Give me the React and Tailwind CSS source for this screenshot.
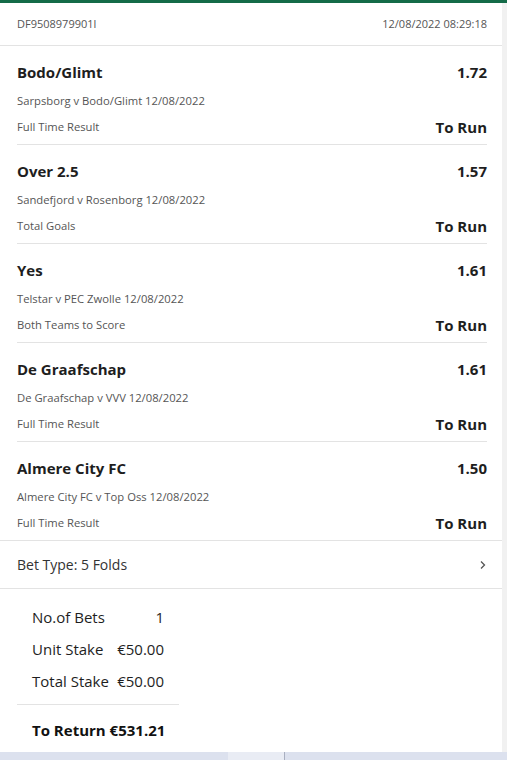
import React from "react";

const legs = [
  { pick: "Bodo/Glimt", odds: "1.72", event: "Sarpsborg v Bodo/Glimt 12/08/2022", market: "Full Time Result" },
  { pick: "Over 2.5", odds: "1.57", event: "Sandefjord v Rosenborg 12/08/2022", market: "Total Goals" },
  { pick: "Yes", odds: "1.61", event: "Telstar v PEC Zwolle 12/08/2022", market: "Both Teams to Score" },
  { pick: "De Graafschap", odds: "1.61", event: "De Graafschap v VVV 12/08/2022", market: "Full Time Result" },
  { pick: "Almere City FC", odds: "1.50", event: "Almere City FC v Top Oss 12/08/2022", market: "Full Time Result" },
];

const summary = [
  { label: "No.of Bets", value: "1" },
  { label: "Unit Stake", value: "€50.00" },
  { label: "Total Stake", value: "€50.00" },
];

export default function App() {
  return (
    <div
      className="w-[507px] h-[760px] bg-[#f1f1f1] flex flex-col overflow-hidden"
      style={{ fontFamily: '"Open Sans", "Noto Sans", sans-serif' }}
    >
      {/* barra verde superior */}
      <div className="h-[3px] bg-[#146b48] shrink-0"></div>

      <div className="flex-1 flex">
        <div className="w-[502px] bg-white flex flex-col">
          {/* cabecera con referencia y fecha */}
          <div className="h-[43px] pl-[17px] pr-[15px] flex items-center justify-between text-[11px] text-[#555] border-b border-[#e3e3e3]">
            <span>DF9508979901l</span>
            <span>12/08/2022 08:29:18</span>
          </div>

          {/* selecciones */}
          {legs.map((leg, i) => {
            const last = i === legs.length - 1;
            return (
              <div key={i} className={last ? "border-b border-[#e3e3e3]" : ""}>
                <div className={"ml-[17px] mr-[15px] pt-[16px] pb-[7px] " + (last ? "" : "border-b border-[#e3e3e3]")}>
                  <div className="h-[20px] flex items-center justify-between text-[15px] font-bold text-[#1e1e1e]">
                    <span>{leg.pick}</span>
                    <span>{leg.odds}</span>
                  </div>
                  <div className="mt-[11px] h-[16px] leading-[16px] text-[11.25px] text-[#555]">{leg.event}</div>
                  <div className="mt-[8px] h-[20px] flex items-center justify-between">
                    <span className="text-[11.25px] text-[#555]">{leg.market}</span>
                    <span className="text-[15px] font-bold text-[#1e1e1e]">To Run</span>
                  </div>
                </div>
              </div>
            );
          })}

          {/* tipo de apuesta */}
          <div className="h-[48px] pl-[17px] pr-[15px] flex items-center justify-between border-b border-[#e3e3e3] text-[14px] text-[#333]">
            <span>Bet Type: 5 Folds</span>
            <svg width="8" height="10" viewBox="0 0 8 10">
              <path d="M2 1.5 L5.5 5 L2 8.5" fill="none" stroke="#555" strokeWidth="1.3" />
            </svg>
          </div>

          {/* resumen */}
          <div className="px-[17px] pt-[12px] flex-1">
            <div className="w-[162px]">
              <div className="px-[15px] pb-[7px] border-b border-[#e3e3e3]">
                {summary.map((row) => (
                  <div key={row.label} className="h-[32px] flex items-center justify-between text-[15px] text-[#1e1e1e]">
                    <span>{row.label}</span>
                    <span>{row.value}</span>
                  </div>
                ))}
              </div>
              <div className="pl-[15px] pt-[9px] h-[32px] leading-[32px] box-content whitespace-nowrap text-[15px] font-bold text-[#111]">
                To Return €531.21
              </div>
            </div>
          </div>
        </div>
      </div>

      {/* franja inferior */}
      <div className="h-[8px] shrink-0 flex bg-[#dce1ee]">
        <div className="w-[228px]"></div>
        <div className="w-[56px] bg-[#e9ecf4]"></div>
        <div className="w-[1px] bg-[#a9afc0]"></div>
      </div>
    </div>
  );
}
